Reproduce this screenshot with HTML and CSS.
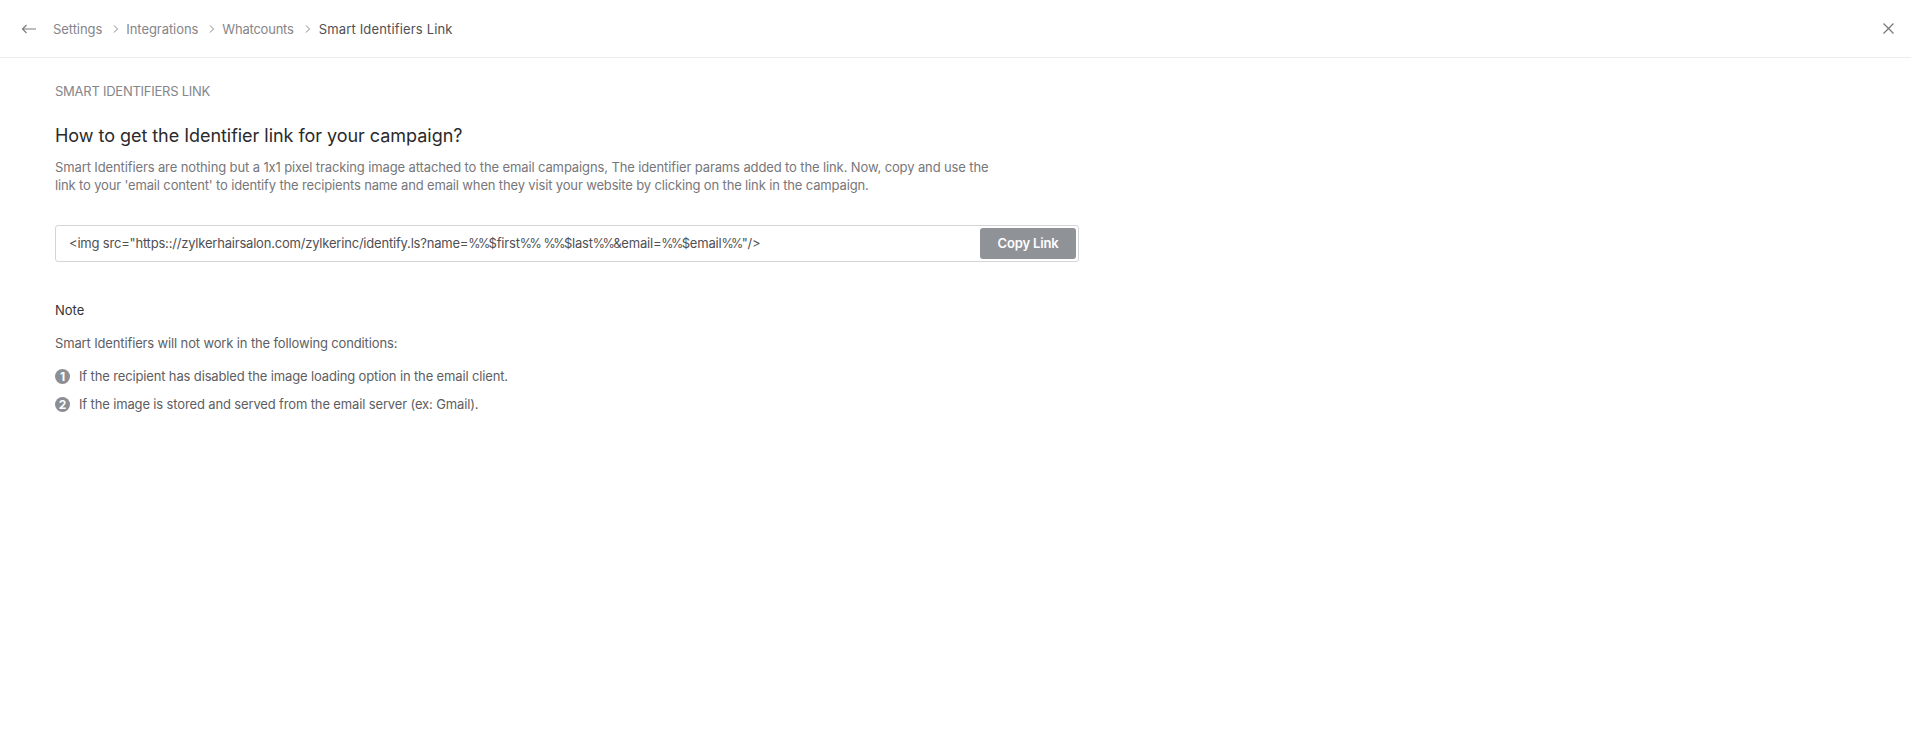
FILE: index.html
```html
<!DOCTYPE html>
<html lang="en">
<head>
<meta charset="utf-8">
<title>Smart Identifiers Link</title>
<link rel="stylesheet" href="styles.css">
</head>
<body>
<header class="topbar">
  <svg class="back" width="16" height="12" viewBox="0 0 16 12" fill="none"><path d="M15 6H1.5M5.5 2 1.5 6l4 4" stroke="#7d7d82" stroke-width="1.2"/></svg>
  <nav class="crumbs">
    <span class="crumb">Settings</span>
    <svg class="sep" width="6" height="10" viewBox="0 0 6 10" fill="none"><path d="M1 1.5l3.5 3.5L1 8.5" stroke="#8a8a8e"/></svg>
    <span class="crumb">Integrations</span>
    <svg class="sep" width="6" height="10" viewBox="0 0 6 10" fill="none"><path d="M1 1.5l3.5 3.5L1 8.5" stroke="#8a8a8e"/></svg>
    <span class="crumb tight">Whatcounts</span>
    <svg class="sep last" width="6" height="10" viewBox="0 0 6 10" fill="none"><path d="M1 1.5l3.5 3.5L1 8.5" stroke="#8a8a8e"/></svg>
    <span class="crumb current">Smart Identifiers Link</span>
  </nav>
  <svg class="close" width="11" height="11" viewBox="0 0 11 11" fill="none"><path d="M.5.5l10 10M10.5.5l-10 10" stroke="#77777b" stroke-width="1.2"/></svg>
</header>
<main class="content">
  <div class="label">SMART IDENTIFIERS LINK</div>
  <h1 class="title">How to get the Identifier link for your campaign?</h1>
  <p class="desc">Smart Identifiers are nothing but a 1x1 pixel tracking image attached to the email campaigns, The identifier params added to the link. Now, copy and use the<br><span class="desc-tail">link to your 'email content' to identify the recipients name and email when they visit your website by clicking on the link in the campaign.</span></p>
  <div class="linkbox">
    <span class="code">&lt;img src="https:://zylkerhairsalon.com/zylkerinc/identify.ls?name=<span class="pct">%%</span>$first<span class="pct">%%</span> <span class="pct">%%</span>$last<span class="pct">%%</span>&amp;email=<span class="pct">%%</span>$email<span class="pct">%%</span>"/&gt;</span>
    <button class="copy">Copy Link</button>
  </div>
  <h2 class="note">Note</h2>
  <p class="cond">Smart Identifiers will not work in the following conditions:</p>
  <ol class="list">
    <li class="item"><span class="num">1</span>If the recipient has disabled the image loading option in the email client.</li>
    <li class="item"><span class="num">2</span>If the image is stored and served from the email server (ex: Gmail).</li>
  </ol>
</main>
</body>
</html>
```
FILE: styles.css
```css
* { box-sizing: border-box; }
html, body { margin: 0; padding: 0; }
body {
  font-family: Inter, "Liberation Sans", sans-serif;
  font-size: 13px;
  font-feature-settings: "calt" 0;
  color: #444;
  background: #fff;
  height: 747px;
  overflow: hidden;
}
.topbar {
  height: 58px;
  display: flex;
  align-items: center;
  padding: 0 17px 0 21px;
  border-bottom: 1px solid #ececee;
}
.back { margin-right: 16px; }
.crumbs { display: flex; align-items: center; flex: 1; }
.crumb { color: #85858a; letter-spacing: -0.06px; }
.crumb.tight { letter-spacing: -0.22px; }
.crumb.current { color: #505054; letter-spacing: 0.16px; }
.sep { margin: 1px 7px 0 11px; }
.sep.last { margin-right: 8px; }
.content { padding: 0 55px; }
.label { margin-top: 25px; line-height: 16px; color: #85858a; font-size: 13px; letter-spacing: -0.25px; }
.title { margin: 25px 0 0; font-size: 18px; font-weight: 400; line-height: 24px; letter-spacing: -0.04px; color: #2a2a2c; }
.desc { margin: 10px 0 0; line-height: 18px; letter-spacing: -0.12px; color: #77777b; }
.desc-tail { letter-spacing: -0.15px; }
.linkbox {
  margin-top: 31px;
  width: 1024px;
  height: 37px;
  border: 1px solid #d5d5d8;
  border-radius: 3px;
  display: flex;
  align-items: center;
  justify-content: space-between;
  padding: 0 2px 0 13px;
}
.code { color: #505054; letter-spacing: -0.2px; margin-top: -2px; }
.pct { font-size: 12.5px; letter-spacing: -2.6px; margin-right: 1px; }
.copy {
  width: 96px;
  height: 31px;
  border: 0;
  border-radius: 3px;
  padding: 0 0 2px 0;
  background: #8f9297;
  color: #fff;
  font: 600 13px Inter, "Liberation Sans", sans-serif;
  letter-spacing: -0.18px;
}
.note { margin: 39px 0 0; font-size: 13px; font-weight: 400; line-height: 18px; color: #333336; }
.cond { margin: 15px 0 0; line-height: 18px; letter-spacing: -0.14px; color: #5e5e62; }
.list { list-style: none; margin: 15px 0 0; padding: 0; }
.item { display: flex; align-items: center; height: 18px; margin-bottom: 10px; letter-spacing: -0.14px; color: #5e5e62; }
.num {
  width: 15px;
  height: 15px;
  border-radius: 50%;
  background: #8b8e94;
  color: #fff;
  font-size: 12px;
  font-weight: 700;
  line-height: 15px;
  text-align: center;
  margin-right: 9px;
  flex: none;
}
```
